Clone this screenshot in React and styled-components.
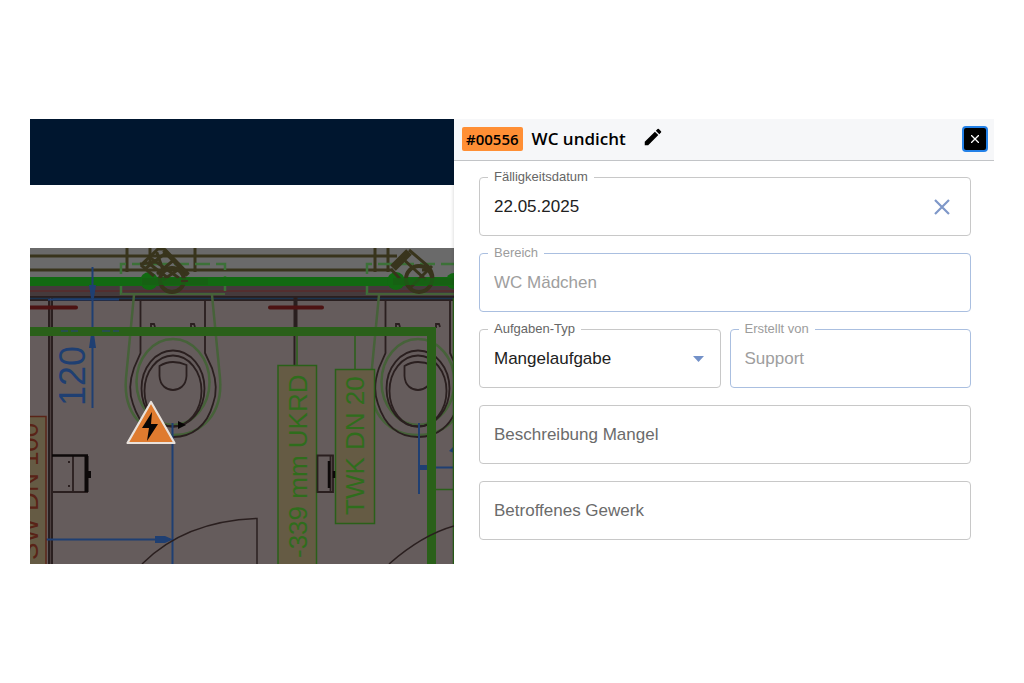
import React, { useState } from "react";
import styled, { createGlobalStyle } from "styled-components";

const GlobalStyle = createGlobalStyle`
  * { box-sizing: border-box; }
  body { margin: 0; background: #fff; font-family: "Liberation Sans", Arial, sans-serif; }
`;

const Page = styled.main`
  display: grid;
  grid-template-columns: minmax(0, 1fr) minmax(0, 540px);
  padding: 119px 30px;
`;

const Viewer = styled.section`
  display: flex;
  flex-direction: column;
  min-width: 0;
`;

const TopBar = styled.header`
  height: 66px;
  background: #00162f;
`;

const Toolbar = styled.div`
  height: 63px;
  background: #fff;
`;

const Plan = styled.svg`
  display: block;
  width: 100%;
  flex: 1;
  min-height: 316px;
  background: #655c5c;
`;

const PlanText = styled.text`
  font-family: "Liberation Sans", Arial, sans-serif;
  font-size: ${(p) => p.$size}px;
  fill: ${(p) => p.$color};
`;

const Panel = styled.section`
  background: #fff;
  min-width: 0;
  box-shadow: -1px 0 3px rgba(0, 0, 0, 0.12);
  clip-path: inset(0 0 0 -4px);
`;

const PanelHeader = styled.header`
  display: flex;
  align-items: center;
  height: 42px;
  padding: 0 6px 2px 8px;
  background: #f6f7f9;
  border-bottom: 1px solid #c2c4c7;
  font-family: "Open Sans", "Noto Sans", sans-serif;
  color: #000;
`;

const Badge = styled.span`
  padding: 0 4px;
  border-radius: 2px;
  background: #ff8f35;
  font-size: 15px;
  font-weight: 600;
  line-height: 24px;
`;

const Title = styled.h1`
  margin: 0 0 0 9px;
  font-size: 17px;
  font-weight: 600;
  line-height: 24px;
`;

const IconButton = styled.button`
  display: flex;
  align-items: center;
  justify-content: center;
  padding: 0;
  border: 0;
  background: none;
  color: ${(p) => p.$color || "#000"};
  cursor: pointer;
`;

const EditButton = styled(IconButton)`
  margin-left: 16px;
  padding-bottom: 4px;
`;

const CloseButton = styled(IconButton)`
  width: 26px;
  height: 26px;
  margin-left: auto;
  border: 2px solid #2381e8;
  border-radius: 4px;
  background: #000;
`;

const Form = styled.form`
  display: flex;
  flex-direction: column;
  gap: 17px;
  padding: 16px 23px 24px 25px;
`;

const FieldRow = styled.div`
  display: grid;
  grid-template-columns: 1fr 1fr;
  gap: 9px;
`;

const FieldBox = styled.div`
  position: relative;
  display: flex;
  align-items: center;
  height: 59px;
  min-width: 0;
  padding: 0 ${(p) => p.$end || 20}px 0 14px;
  border: 1px solid ${(p) => (p.$disabled ? "#aabfe0" : "#c8c8c8")};
  border-radius: 4px;
`;

const FieldLabel = styled.label`
  position: absolute;
  top: -9px;
  left: 8px;
  padding: 0 6px;
  background: #fff;
  font-size: 13px;
  line-height: 16px;
  color: ${(p) => (p.$disabled ? "#9c9c9c" : "#666")};
`;

const Input = styled.input`
  flex: 1;
  min-width: 0;
  padding: 0;
  border: 0;
  outline: 0;
  background: none;
  font: 17px/24px "Liberation Sans", Arial, sans-serif;
  color: #212121;
  &::placeholder { color: #6b6b6b; opacity: 1; }
  &:disabled { color: #9e9e9e; }
`;

const Select = styled.select`
  flex: 1;
  min-width: 0;
  padding: 0;
  border: 0;
  outline: 0;
  appearance: none;
  background: none;
  font: 17px/24px "Liberation Sans", Arial, sans-serif;
  color: #212121;
`;

function Field({ id, label, disabled, end, children }) {
  return (
    <FieldBox $disabled={disabled} $end={end}>
      <FieldLabel htmlFor={id} $disabled={disabled}>{label}</FieldLabel>
      {children}
    </FieldBox>
  );
}

const BLUE = "#1f3f72";
const INK = "#2a1f1f";
const LEAF = "#466239";
const OLIVE = "#38341c";
const TAG = "#655b44";
const PIPE = "#2a6019";

function Toilet({ x }) {
  return (
    <g transform={`translate(${x} 0)`} fill="none">
      <g stroke={LEAF} strokeWidth="2.5">
        <path d="M104 47 96 130C93 166 114 187 143 187S193 166 190 130L182 47" />
        <ellipse cx="143" cy="134" rx="36.500" ry="43" />
      </g>
      <g stroke={INK} strokeWidth="1.8">
        <path d="M110.500 52V105L104 120Q97 140 103 156C110 178 124 189 143 189S177 178 183 156Q189 140 182 120L175 105V52" />
        <ellipse cx="143" cy="140.500" rx="31.500" ry="38" />
        <ellipse cx="143" cy="143" rx="28.500" ry="35.500" />
        <path d="M129.500 118Q136 114 143 114T156.500 117V128C156 138 149 142 143 142S130 138 129.500 128Z" />
        <path d="M121 80V76H124L125 79M161 80V76H164L165 79" />
      </g>
    </g>
  );
}

function FloorPlan() {
  return (
    <Plan viewBox="0 0 424 316" preserveAspectRatio="xMinYMin slice" role="img" aria-label="Grundriss">
      <rect width="424" height="38" fill="#6a6a6a" />
      <rect y="37" width="424" height="12" fill="#453a3c" />
      <path d="M0 43H424" stroke="#582b2b" strokeWidth="1.5" />

      <g stroke={OLIVE} strokeWidth="3" fill="none">
        <path d="M0 8H367M0 22H362M97 0V24M120 0V16M165 0V24M345 0V24M358 0V24M165 8H367M392 22H398" />
      </g>
      <g stroke="#3c7138" strokeWidth="2.5" fill="none" strokeDasharray="15 6">
        <path d="M91 47V16H195V47M337 47V16H424" />
      </g>
      <path d="M91 46H195M337 46H424" stroke={LEAF} strokeWidth="2" />
      <path d="M0 33.500H424" stroke="#126a12" strokeWidth="9" />
      <g fill="#126a12">
        <circle cx="119" cy="33" r="9" />
        <circle cx="366" cy="33" r="9" />
        <circle cx="424" cy="33" r="8" />
      </g>
      <g stroke={OLIVE} fill="none">
        <g strokeWidth="3">
          <path d="M111 17 128 1H134L158 27M111 17 124 28M116 20 137 4M119 9 149 30M121 17 138 30M127 26 145 11M133 32 152 19M126 2 134 25M110 16 126 14" />
          <path d="M134 2 158 27" strokeWidth="5" />
          <circle cx="142" cy="32" r="12" strokeWidth="4" />
        </g>
        <path d="M363 20 379 4" strokeWidth="8" />
        <path d="M379 2 398 18Q403 23 403 31M361 21 370 31M372 10 396 32M402 18 380 40" strokeWidth="3" />
        <circle cx="389" cy="31" r="13" strokeWidth="4" />
      </g>
      <path d="M112 33.500H178M363 33.500H424" stroke="#186014" strokeWidth="7" opacity=".8" />
      <path d="M151 33H158" stroke={OLIVE} strokeWidth="2" />

      <path d="M0 49H424M0 52H424" stroke={INK} strokeWidth="1.800" />
      <path d="M0 50.500H424" stroke="#1c344e" strokeWidth="1.600" />
      <path d="M19 50V316M22 50V316" stroke={INK} strokeWidth="2" />
      <path d="M20.500 50V316" stroke="#4c4040" strokeWidth="1" />
      <path d="M264.500 49V117M266.500 49V88" stroke={INK} strokeWidth="2" />
      <path d="M-2 59.500H46M240 59.500H292" stroke="#4c1212" strokeWidth="4" strokeLinecap="round" />

      <Toilet x={0} />
      <Toilet x={245} />

      <g stroke={BLUE} strokeWidth="2" fill="none">
        <path d="M62.500 19V160M18 51.500H89M142.500 175V316M0 291.500H140M389 175V246M389 219.500H424" />
      </g>
      <g fill={BLUE}>
        <path d="M59 37H66L64 50H61ZM61 86H64L66 100H59ZM125 288H135L143 291.500 135 295H125ZM389 217H397V222H389ZM424 198V205L419 203Z" />
      </g>
      <g transform="translate(55 158) rotate(-90)">
        <PlanText $size={36} $color={BLUE}>120</PlanText>
      </g>

      <path d="M267 88V118M325 88V122M406 241.500H424" stroke={PIPE} strokeWidth="1.500" />
      <path d="M0 83.500H401.500V316" stroke={PIPE} strokeWidth="9" fill="none" />
      <path d="M423.500 50V316" stroke={PIPE} strokeWidth="1.500" />
      <path d="M31 83H38M41 83H48M72 83H80M83 83H89" stroke="#294f50" strokeWidth="2" />

      <g fill={TAG} stroke={PIPE} strokeWidth="1.500">
        <rect x="248" y="117.500" width="38.500" height="200" />
        <rect x="305.500" y="121.500" width="39" height="154" />
        <rect x="-20" y="168.500" width="36" height="150" stroke="#5a2418" />
      </g>
      <g transform="translate(277 310) rotate(-90)">
        <PlanText $size={26} $color="#2f6d1c">-339 mm UKRD</PlanText>
      </g>
      <g transform="translate(334 267) rotate(-90)">
        <PlanText $size={26} $color="#2f6d1c">TWK DN 20</PlanText>
      </g>
      <g transform="translate(8 312) rotate(-90)">
        <PlanText $size={26} $color="#592317">SW DN 100</PlanText>
      </g>

      <g stroke={INK} fill="none" strokeWidth="1.800">
        <path d="M22 244H58M43 207V244" />
        <path d="M22 207.500H58" strokeWidth="2.500" stroke="#0d0909" />
        <path d="M56.500 208V244M59 223V230" strokeWidth="4" stroke="#0d0909" />
        <path d="M38 214H40M38 238H40" />
        <path d="M287.500 207.500H303V244H287.500ZM300.500 208V244" />
        <path d="M299 213V240M304 223V230" strokeWidth="2.500" stroke="#0d0909" />
        <path d="M112 316Q155 273 227 270.500V316M359 316Q392 287 424 278" strokeWidth="1.500" />
      </g>
      <path d="M148 173 156 177 148 181Z" fill="#080606" />
      <path d="M121 154 144.500 195H97.500Z" fill="#df7b2f" stroke="#e9e2dc" strokeWidth="2.200" strokeLinejoin="round" />
      <path d="M122 164 112 180H119L117 193 128 176H121Z" fill="#080606" />
    </Plan>
  );
}

export default function App() {
  const [date, setDate] = useState("22.05.2025");
  return (
    <>
      <GlobalStyle />
      <Page>
        <Viewer>
          <TopBar />
          <Toolbar />
          <FloorPlan />
        </Viewer>
        <Panel>
          <PanelHeader>
            <Badge>#00556</Badge>
            <Title>WC undicht</Title>
            <EditButton type="button" aria-label="Titel bearbeiten">
              <svg width="22" height="22" viewBox="0 0 24 24" fill="currentColor">
                <path d="M3 17.250V21h3.750L17.810 9.940l-3.750-3.750L3 17.250zM20.710 7.040a1 1 0 0 0 0-1.410l-2.340-2.340a1 1 0 0 0-1.410 0l-1.830 1.830 3.750 3.750 1.830-1.830z" />
              </svg>
            </EditButton>
            <CloseButton type="button" aria-label="Schließen" $color="#fff">
              <svg width="8" height="8" viewBox="0 0 8 8" stroke="currentColor" strokeWidth="1.300">
                <path d="M0 0l8 8M8 0L0 8" />
              </svg>
            </CloseButton>
          </PanelHeader>
          <Form>
            <Field id="due" label="Fälligkeitsdatum">
              <Input id="due" value={date} onChange={(e) => setDate(e.target.value)} />
              <IconButton type="button" aria-label="Datum löschen" $color="#7f98c9" onClick={() => setDate("")}>
                <svg width="16" height="16" viewBox="0 0 16 16" stroke="currentColor" strokeWidth="2.200">
                  <path d="M1 1l14 14M15 1L1 15" />
                </svg>
              </IconButton>
            </Field>
            <Field id="area" label="Bereich" disabled>
              <Input id="area" defaultValue="WC Mädchen" disabled />
            </Field>
            <FieldRow>
              <Field id="type" label="Aufgaben-Typ" end={16}>
                <Select id="type" defaultValue="Mangelaufgabe">
                  <option>Mangelaufgabe</option>
                </Select>
                <svg width="11" height="6" viewBox="0 0 11 6" fill="#7391c8" aria-hidden="true">
                  <path d="M0 0h11L5.500 6z" />
                </svg>
              </Field>
              <Field id="author" label="Erstellt von" disabled>
                <Input id="author" defaultValue="Support" disabled />
              </Field>
            </FieldRow>
            <FieldBox>
              <Input aria-label="Beschreibung Mangel" placeholder="Beschreibung Mangel" />
            </FieldBox>
            <FieldBox>
              <Input aria-label="Betroffenes Gewerk" placeholder="Betroffenes Gewerk" />
            </FieldBox>
          </Form>
        </Panel>
      </Page>
    </>
  );
}
